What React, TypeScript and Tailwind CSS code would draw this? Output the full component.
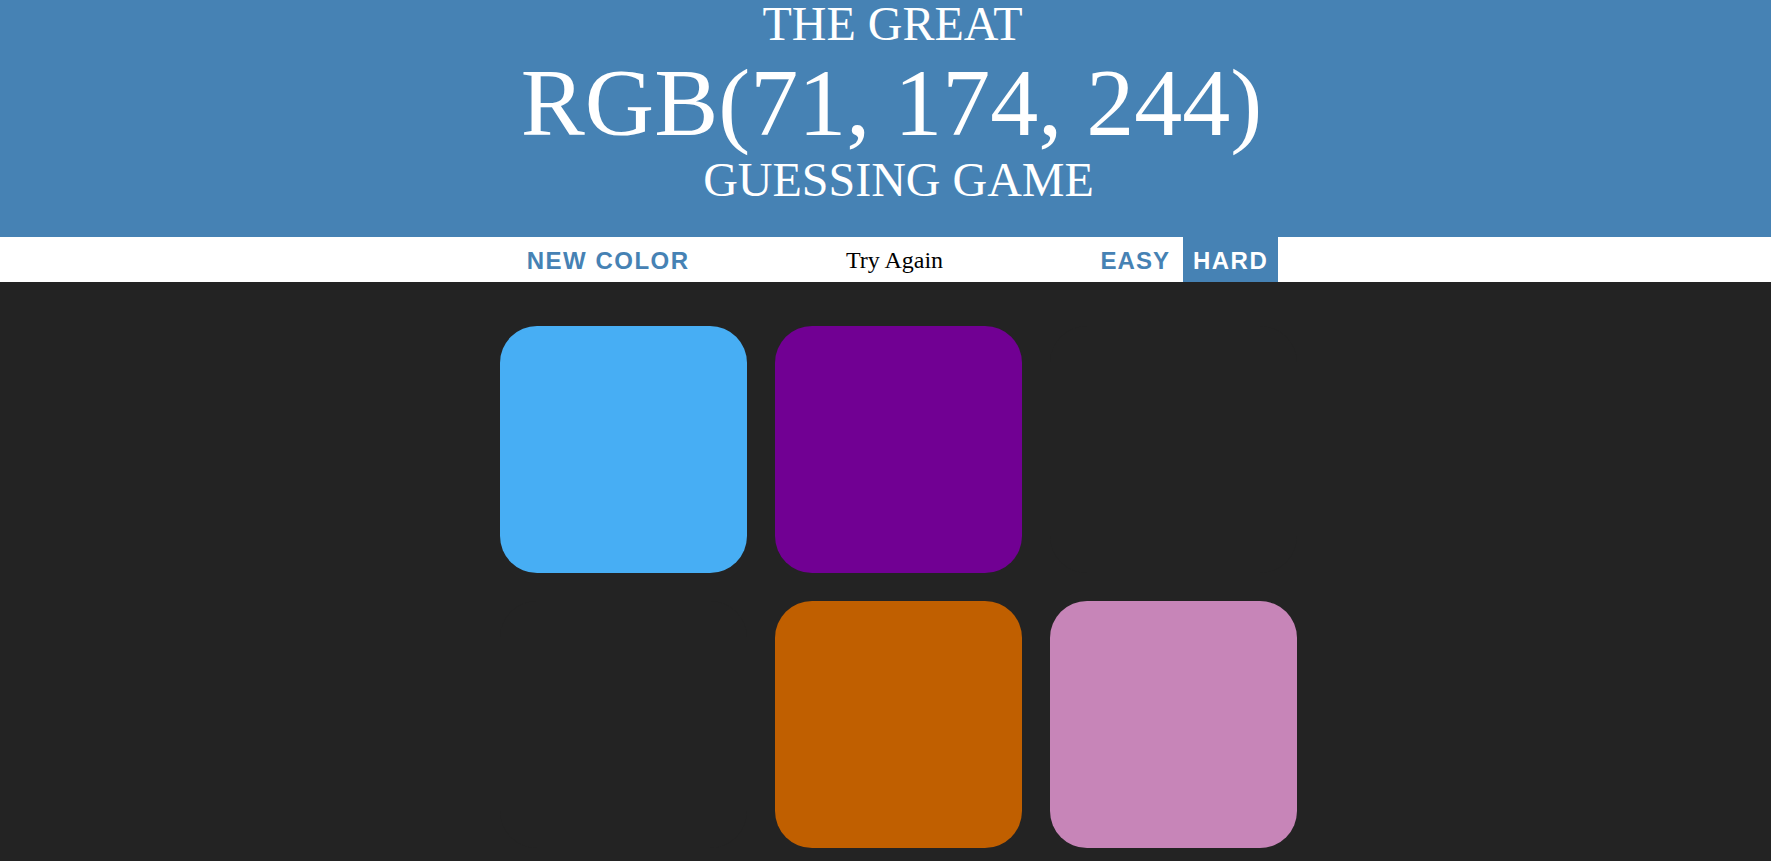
import React from "react";

const squares = [
  "#47aef4",
  "#710093",
  "#232323",
  "#232323",
  "#c05f00",
  "#c785b8",
];

export default function App() {
  return (
    <div className="min-h-screen bg-[#232323]" style={{ fontFamily: '"Liberation Serif", "Times New Roman", serif' }}>
      <h1 className="h-[237px] bg-[#4682b4] text-white font-normal uppercase text-center pl-[14px]">
        <div className="text-[48px] leading-[48px]">THE GREAT</div>
        <div className="text-[96px] leading-[109px] pr-[2px]">RGB(71, 174, 244)</div>
        <div className="text-[48px] leading-[45px] pl-[12px]">GUESSING GAME</div>
      </h1>
      <div className="h-[45px] bg-white flex justify-center items-stretch pl-[24px]">
        <button
          className="px-[10px] text-[24px] font-bold tracking-[1.5px] text-[#4682b4] uppercase bg-white pt-[2px]"
          style={{ fontFamily: '"Liberation Sans", Arial, sans-serif' }}
        >
          NEW COLOR
        </button>
        <span className="w-[390px] flex items-center justify-center text-[24px] text-black pt-[1px]">Try Again</span>
        <button
          className="pl-[11px] pr-[13px] text-[24px] font-bold tracking-[1px] text-[#4682b4] uppercase bg-white pt-[2px]"
          style={{ fontFamily: '"Liberation Sans", Arial, sans-serif' }}
        >
          EASY
        </button>
        <button
          className="px-[10px] text-[24px] font-bold tracking-[1.5px] text-white uppercase bg-[#4682b4] pt-[2px]"
          style={{ fontFamily: '"Liberation Sans", Arial, sans-serif' }}
        >
          HARD
        </button>
      </div>
      <div className="flex justify-center pl-[26px] pt-[44px] pb-[20px]">
        <div className="grid grid-cols-[repeat(3,247px)] gap-x-[28px] gap-y-[28px]">
          {squares.map((c, i) => (
            <div key={i} className="w-[247px] h-[247px] rounded-[15%]" style={{ backgroundColor: c }} />
          ))}
        </div>
      </div>
    </div>
  );
}
